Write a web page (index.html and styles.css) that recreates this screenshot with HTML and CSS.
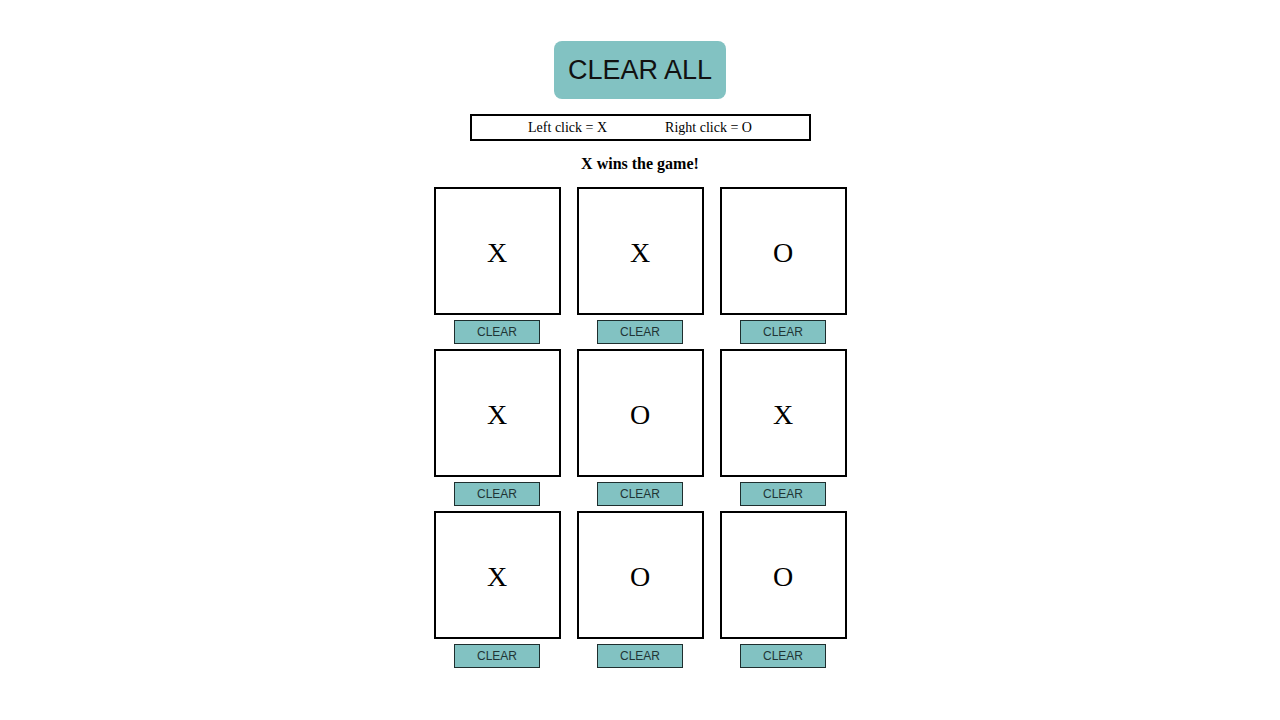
FILE: index.html
```html
<!DOCTYPE html>
<html>
<head>
<meta charset="utf-8">
<link rel="stylesheet" href="styles.css">
</head>
<body>
<div class="page">
  <button class="clear-all">CLEAR ALL</button>
  <div class="help">
    <span>Left click = X</span>
    <span>Right click = O</span>
  </div>
  <div class="status">X wins the game!</div>
  <div class="board">
    <div class="slot"><div class="cell">X</div><button class="clear">CLEAR</button></div>
    <div class="slot"><div class="cell">X</div><button class="clear">CLEAR</button></div>
    <div class="slot"><div class="cell">O</div><button class="clear">CLEAR</button></div>
    <div class="slot"><div class="cell">X</div><button class="clear">CLEAR</button></div>
    <div class="slot"><div class="cell">O</div><button class="clear">CLEAR</button></div>
    <div class="slot"><div class="cell">X</div><button class="clear">CLEAR</button></div>
    <div class="slot"><div class="cell">X</div><button class="clear">CLEAR</button></div>
    <div class="slot"><div class="cell">O</div><button class="clear">CLEAR</button></div>
    <div class="slot"><div class="cell">O</div><button class="clear">CLEAR</button></div>
  </div>
</div>
</body>
</html>
```
FILE: styles.css
```css
html, body {
  margin: 0;
  padding: 0;
  background: #ffffff;
}
.page {
  width: 1280px;
  height: 720px;
  display: flex;
  flex-direction: column;
  align-items: center;
  font-family: "Liberation Serif", "Times New Roman", serif;
  color: #000;
}
.clear-all {
  margin-top: 41px;
  width: 172px;
  height: 58px;
  background: #82c2c2;
  border: none;
  border-radius: 8px;
  font-family: "Liberation Sans", Arial, sans-serif;
  font-size: 27px;
  color: #111;
  padding: 0;
}
.help {
  margin-top: 15px;
  width: 337px;
  height: 22px;
  padding-top: 1px;
  box-sizing: content-box;
  border: 2px solid #000;
  display: flex;
  justify-content: center;
  align-items: center;
  gap: 58px;
  font-size: 14px;
}
.status {
  margin-top: 13px;
  font-weight: bold;
  font-size: 16px;
  line-height: 20px;
}
.board {
  margin-top: 13px;
  display: grid;
  grid-template-columns: repeat(3, 127px);
  column-gap: 16px;
}
.slot {
  display: flex;
  flex-direction: column;
  align-items: center;
}
.cell {
  box-sizing: border-box;
  width: 127px;
  height: 128px;
  padding-top: 3px;
  border: 2px solid #000;
  display: flex;
  align-items: center;
  justify-content: center;
  font-size: 28px;
}
.clear {
  margin-top: 5px;
  margin-bottom: 5px;
  width: 86px;
  height: 24px;
  background: #82c2c2;
  border: 1.5px solid #1e2e2e;
  padding: 0;
  font-family: "Liberation Sans", Arial, sans-serif;
  font-size: 12px;
  color: #1f3535;
}
```
